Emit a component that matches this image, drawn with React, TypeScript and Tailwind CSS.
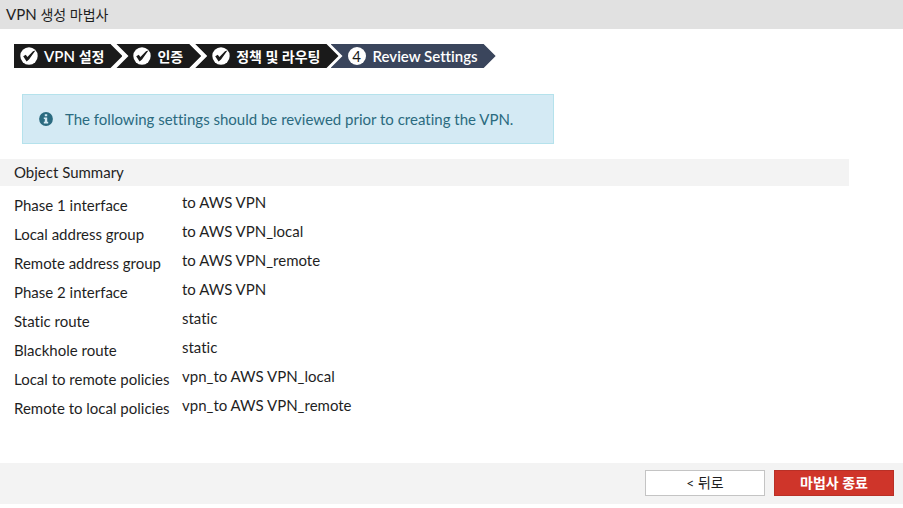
import clsx from "clsx";

const steps = [
  { prefix: "VPN ", label: "설정", done: true },
  { label: "인증", done: true },
  { label: "정책 및 라우팅", done: true },
  { prefix: "Review Settings", done: false },
];

const summary = [
  { label: "Phase 1 interface", value: "to AWS VPN" },
  { label: "Local address group", value: "to AWS VPN_local" },
  { label: "Remote address group", value: "to AWS VPN_remote" },
  { label: "Phase 2 interface", value: "to AWS VPN" },
  { label: "Static route", value: "static" },
  { label: "Blackhole route", value: "static" },
  { label: "Local to remote policies", value: "vpn_to AWS VPN_local" },
  { label: "Remote to local policies", value: "vpn_to AWS VPN_remote" },
];

const CheckBadge: React.FC = () => (
  <svg viewBox="0 0 18 18" className="h-[18px] w-[18px] shrink-0" aria-hidden="true">
    <circle cx="9" cy="9" r="8.7" fill="#fff" />
    <path d="M3.2 9.2 5.8 7.8 7.4 10 13 4.2 15.4 3.6 9 12.4 6.6 14.6Z" fill="#1a1a1a" />
  </svg>
);

const InfoIcon: React.FC = () => (
  <svg viewBox="0 0 14 14" className="h-3.5 w-3.5 shrink-0" aria-hidden="true">
    <circle cx="7" cy="7" r="6.9" fill="#2b6b80" />
    <path d="M5.8 2.2h2.4v2H5.8zM4.8 5.4h3.4v4.4h1v1.7H4.8V9.8h1V7.1h-1z" fill="#d4eaf4" />
  </svg>
);

const StepBar: React.FC = () => (
  <ol className="flex h-6 text-[15px] leading-6 font-semibold text-white">
    {steps.map((step, index) => (
      <li
        key={index}
        aria-current={step.done ? undefined : "step"}
        className={clsx(
          "flex items-center pr-[18px]",
          index === 0
            ? "pl-1.5 [clip-path:polygon(0_0,calc(100%-12px)_0,100%_50%,calc(100%-12px)_100%,0_100%)]"
            : "pl-[17px] [clip-path:polygon(0_0,calc(100%-12px)_0,100%_50%,calc(100%-12px)_100%,0_100%,12px_50%)]",
          index > 0 && (step.done ? "-ml-1.5" : "-ml-2"),
          step.done ? "gap-1.5 bg-[#1a1a1a]" : "gap-[7px] bg-[#3a455c]",
        )}
      >
        {step.done ? (
          <CheckBadge />
        ) : (
          <span className="flex h-[18px] w-[18px] items-center justify-center rounded-full bg-white font-normal text-[#1a1a1a]">
            {index + 1}
          </span>
        )}
        <span className="whitespace-nowrap">
          {step.prefix}
          {step.label && <span className="text-sm leading-none">{step.label}</span>}
        </span>
      </li>
    ))}
  </ol>
);

export default function App() {
  return (
    <div className="bg-white font-[Lato,'Noto_Sans_CJK_KR',sans-serif] text-[15px] leading-[19px] text-[#1f1f1f] [font-variant-ligatures:none]">
      <header className="bg-[#e1e1e1] px-1.5 py-[5px]">
        <h1>
          VPN <span className="text-sm leading-none">생성 마법사</span>
        </h1>
      </header>

      <main className="pt-[15px] pb-[43px]">
        <div className="px-3.5">
          <StepBar />
        </div>

        <div
          role="status"
          className="mt-[26px] ml-[22px] flex max-w-[532px] items-center gap-3 border border-[#b5e2ec] bg-[#d4eaf4] px-4 py-3.5 leading-5 text-[#2b6b80]"
        >
          <InfoIcon />
          <p>The following settings should be reviewed prior to creating the VPN.</p>
        </div>

        <section className="mt-[15px]">
          <h2 className="mr-[54px] bg-[#f3f3f3] px-3.5 py-1">Object Summary</h2>
          <dl className="mt-0.5 px-3.5">
            {summary.map((row) => (
              <div key={row.label} className="flex h-[29px]">
                <dt className="w-[168px] shrink-0 pt-2">{row.label}</dt>
                <dd className="pt-[5px]">{row.value}</dd>
              </div>
            ))}
          </dl>
        </section>
      </main>

      <footer className="flex justify-end gap-[9px] bg-[#f3f3f3] px-[9px] pt-[7px] pb-2 text-sm">
        <button type="button" className="h-[26px] w-[120px] border border-[#c4c4c4] bg-white">
          &lt; 뒤로
        </button>
        <button type="button" className="h-[26px] w-[120px] border border-[#b93026] bg-[#cf352a] font-semibold text-white">
          마법사 종료
        </button>
      </footer>
    </div>
  );
}
